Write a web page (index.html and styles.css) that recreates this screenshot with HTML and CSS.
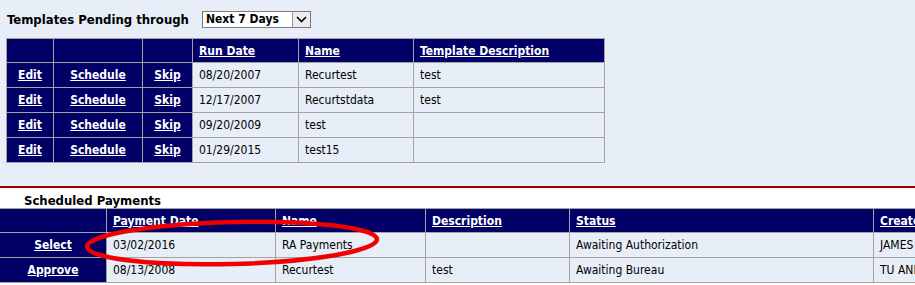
FILE: index.html
```html
<!DOCTYPE html>
<html lang="en">
<head>
    <meta charset="UTF-8">
    <title>Templates Pending</title>
    <link rel="stylesheet" href="styles.css">
</head>
<body>
    <div class="pending">
        <div class="toolbar">
            <span class="title">Templates Pending through</span>
            <div class="select">
                <span class="select-text">Next 7 Days</span>
                <span class="select-btn">
                    <svg width="11" height="7" viewBox="0 0 11 7"><path d="M1 1 L5.5 5.5 L10 1" fill="none" stroke="#000" stroke-width="1.6"/></svg>
                </span>
            </div>
        </div>

        <table class="grid templates">
            <colgroup>
                <col style="width:47px"><col style="width:89px"><col style="width:50px">
                <col style="width:106px"><col style="width:115px"><col style="width:191px">
            </colgroup>
            <tr class="head">
                <th></th><th></th><th></th>
                <th><a href="#">Run Date</a></th>
                <th><a href="#">Name</a></th>
                <th><a href="#">Template Description</a></th>
            </tr>
            <tr>
                <td class="act"><a href="#">Edit</a></td><td class="act"><a href="#">Schedule</a></td><td class="act"><a href="#">Skip</a></td>
                <td>08/20/2007</td><td>Recurtest</td><td>test</td>
            </tr>
            <tr>
                <td class="act"><a href="#">Edit</a></td><td class="act"><a href="#">Schedule</a></td><td class="act"><a href="#">Skip</a></td>
                <td>12/17/2007</td><td>Recurtstdata</td><td>test</td>
            </tr>
            <tr>
                <td class="act"><a href="#">Edit</a></td><td class="act"><a href="#">Schedule</a></td><td class="act"><a href="#">Skip</a></td>
                <td>09/20/2009</td><td>test</td><td></td>
            </tr>
            <tr>
                <td class="act"><a href="#">Edit</a></td><td class="act"><a href="#">Schedule</a></td><td class="act"><a href="#">Skip</a></td>
                <td>01/29/2015</td><td>test15</td><td></td>
            </tr>
        </table>
    </div>

    <div class="scheduled">
        <div class="section-title">Scheduled Payments</div>
        <table class="grid payments">
            <colgroup>
                <col style="width:107px"><col style="width:169px"><col style="width:150px">
                <col style="width:144px"><col style="width:304px"><col style="width:120px">
            </colgroup>
            <tr class="head">
                <th></th>
                <th><a href="#">Payment Date</a></th>
                <th><a href="#">Name</a></th>
                <th><a href="#">Description</a></th>
                <th><a href="#">Status</a></th>
                <th><a href="#">Created By</a></th>
            </tr>
            <tr>
                <td class="act"><a href="#">Select</a></td>
                <td>03/02/2016</td><td>RA Payments</td><td></td><td>Awaiting Authorization</td><td>JAMES</td>
            </tr>
            <tr>
                <td class="act"><a href="#">Approve</a></td>
                <td>08/13/2008</td><td>Recurtest</td><td>test</td><td>Awaiting Bureau</td><td>TU ANH</td>
            </tr>
        </table>
        <svg class="mark" width="310" height="56" viewBox="0 0 310 56">
            <ellipse cx="148" cy="27" rx="145" ry="21" fill="none" stroke="#f00000" stroke-width="4.5" transform="rotate(-1.5 148 27)"/>
        </svg>
    </div>
</body>
</html>
```

FILE: styles.css
```css
body {
    margin: 0;
    font-family: "DejaVu Sans Condensed", "DejaVu Sans", sans-serif;
    font-size: 12px;
    color: #000;
    background-color: #fff;
    overflow: hidden;
}
.pending {
    background-color: #e7eef8;
    padding: 10px 0 24px 6px;
    border-bottom: 2px solid #a00000;
    height: 152px;
}
.toolbar {
    display: flex;
    align-items: center;
    height: 18px;
    margin-bottom: 10px;
}
.title {
    font-weight: bold;
    font-size: 13px;
    margin-left: 1px;
    width: 195px;
}
.select {
    display: flex;
    width: 107px;
    height: 15px;
    border: 1px solid #7a7a7a;
    background-color: #fff;
}
.select-text {
    flex: 1;
    font-weight: bold;
    font-size: 12px;
    line-height: 15px;
    padding-left: 3px;
}
.select-btn {
    width: 17px;
    border-left: 1px solid #9a9a9a;
    background-color: #ececec;
    display: flex;
    align-items: center;
    justify-content: center;
}
.grid {
    border-collapse: collapse;
    table-layout: fixed;
}
.templates {
    width: 599px;
}
.payments {
    width: 995px;
    margin-left: -1px;
}
.grid td, .grid th {
    border: 1px solid #a3a3a3;
    height: 24px;
    padding: 0 6px;
    text-align: left;
    background-color: #e7eef8;
    white-space: nowrap;
    overflow: hidden;
}
.grid .head th {
    background-color: #000066;
    height: 23px;
}
.grid a {
    color: #fff;
    font-weight: bold;
}
.grid td.act {
    background-color: #000066;
    text-align: center;
}
.scheduled {
    position: relative;
    background-color: #fff;
}
.section-title {
    font-weight: bold;
    font-size: 13px;
    padding: 6px 0 0 24px;
    height: 14px;
    line-height: 14px;
}
.mark {
    position: absolute;
    left: 84px;
    top: 28px;
}
```
